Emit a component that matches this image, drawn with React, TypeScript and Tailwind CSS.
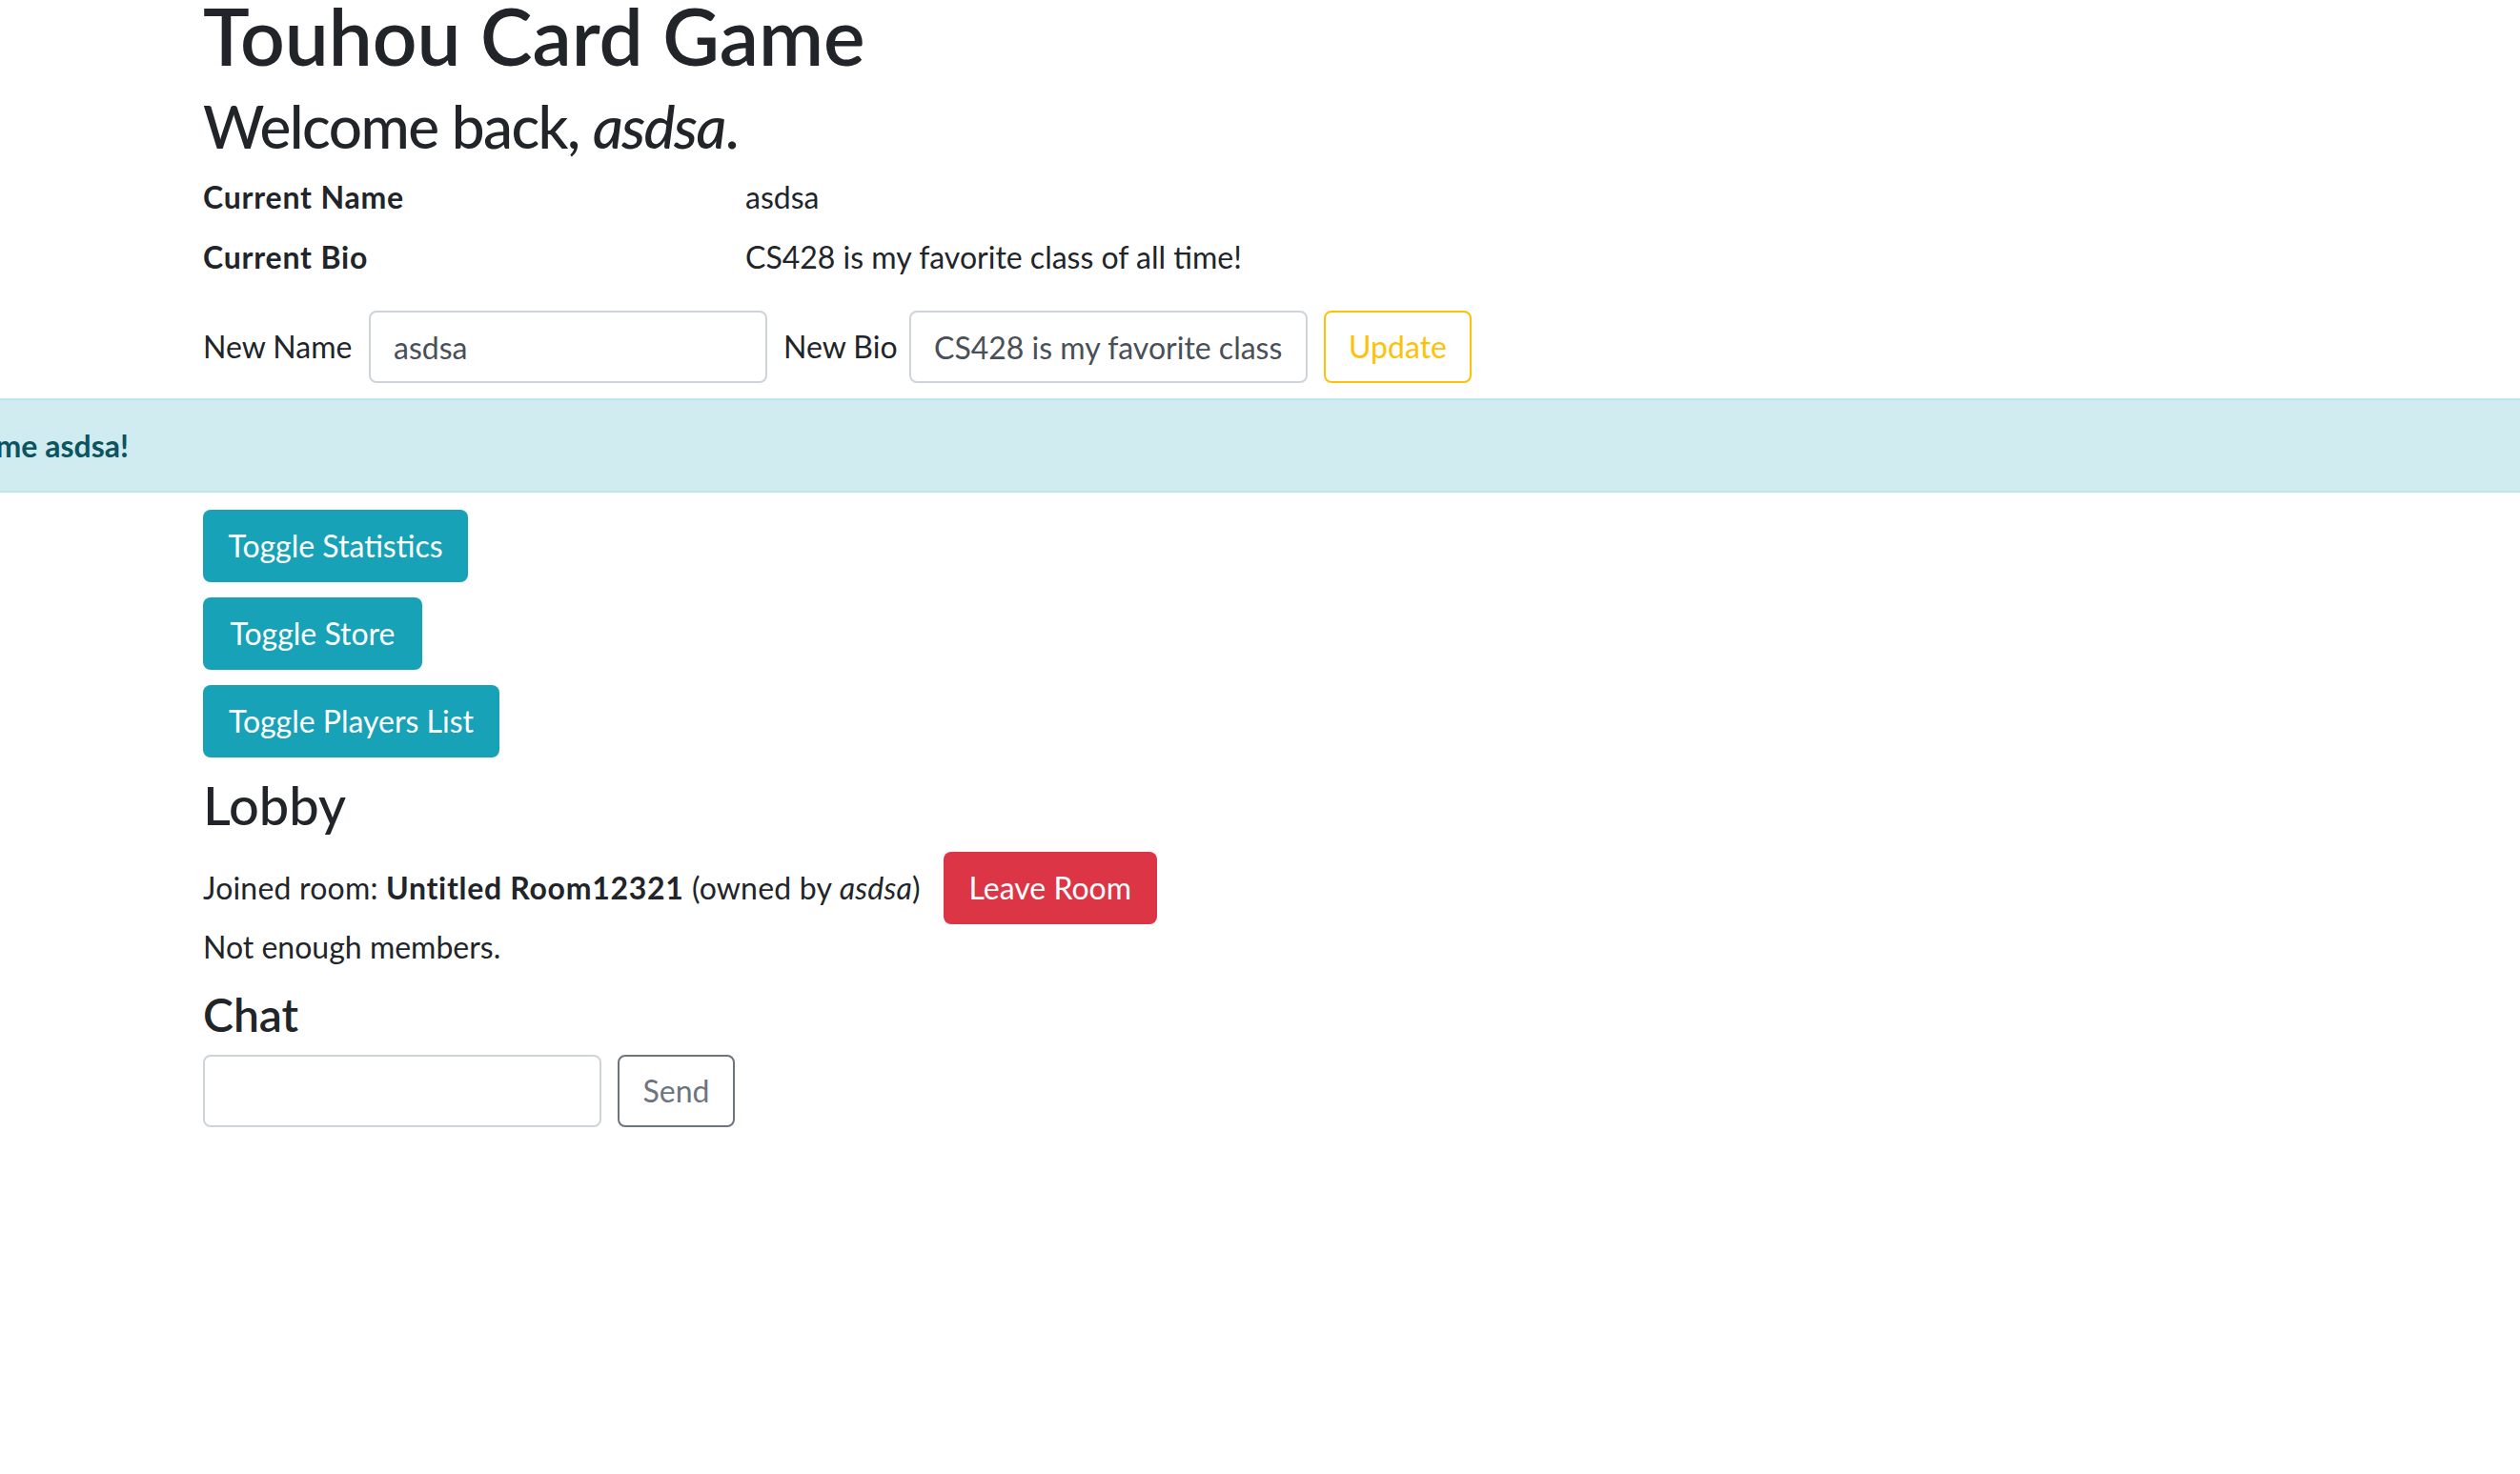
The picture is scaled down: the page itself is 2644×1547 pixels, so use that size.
import React from 'react';

// Lobby page of the card game, after the name change went through
const infoRows = [
  { label: 'Current Name', value: 'asdsa' },
  { label: 'Current Bio', value: 'CS428 is my favorite class of all time!' },
];

const toggles = [
  { label: 'Toggle Statistics', width: 'w-[278px]' },
  { label: 'Toggle Store', width: 'w-[230px]' },
  { label: 'Toggle Players List', width: 'w-[311px]' },
];

const App: React.FC = () => {
  return (
    <div className="min-h-screen bg-white text-[#212529] text-[32px] leading-[48px] [font-family:Lato,'Noto_Sans',sans-serif]">
      <div className="pl-[213px]">
        <h1 className="-mt-[9px] text-[82px] leading-[92px] font-semibold">Touhou Card Game</h1>
        <h2 className="mt-[11px] text-[62px] leading-[77px] font-medium tracking-[-1.5px]">
          Welcome back, <i>asdsa</i>.
        </h2>

        <div className="mt-[12px] flex flex-col gap-[15px]">
          {infoRows.map((row) => (
            <div key={row.label} className="flex">
              <div className="w-[569px] font-bold tracking-[0.8px]">{row.label}</div>
              <div>{row.value}</div>
            </div>
          ))}
        </div>

        <form className="mt-[32px] flex items-center" onSubmit={(e) => e.preventDefault()}>
          <label className="w-[174px]">New Name</label>
          <input
            defaultValue="asdsa"
            className="w-[418px] h-[76px] rounded-[8px] border-2 border-[#ced4da] px-[24px] text-[#495057] outline-none"
          />
          <label className="ml-[17px] w-[132px]">New Bio</label>
          <input
            defaultValue="CS428 is my favorite class of all time!"
            className="w-[418px] h-[76px] rounded-[8px] border-2 border-[#ced4da] px-[24px] text-[#495057] outline-none"
          />
          <button
            type="submit"
            className="ml-[17px] w-[155px] h-[76px] rounded-[8px] border-2 border-[#ffc107] text-[#ffc107]"
          >
            Update
          </button>
        </form>
      </div>

      <div className="mt-[16px] h-[99px] flex items-center border-y-2 border-[#bee5eb] bg-[#d1ecf1] text-[#0c5460] font-bold">
        <div className="w-[135px] flex justify-end overflow-hidden whitespace-nowrap">
          <span>Welcome asdsa!</span>
        </div>
      </div>

      <div className="pl-[213px]">
        <div className="mt-[18px] flex flex-col items-start gap-[16px]">
          {toggles.map((t) => (
            <button
              key={t.label}
              className={`${t.width} h-[76px] rounded-[8px] bg-[#17a2b8] text-white`}
            >
              {t.label}
            </button>
          ))}
        </div>

        <h3 className="mt-[16px] text-[56px] leading-[67px] font-medium">Lobby</h3>

        <div className="mt-[16px] flex items-center">
          <span className="tracking-[0.2px]">
            Joined room: <b className="tracking-[0.7px]">Untitled Room12321</b> (owned by <i>asdsa</i>)
          </span>
          <button className="ml-[24px] w-[224px] h-[76px] rounded-[8px] bg-[#dc3545] text-white">
            Leave Room
          </button>
        </div>
        <p>Not enough members.</p>

        <h4 className="mt-[18px] text-[48px] leading-[58px] font-semibold">Chat</h4>
        <div className="mt-[13px] flex items-center">
          <input className="w-[418px] h-[76px] rounded-[8px] border-2 border-[#ced4da] px-[24px] text-[#495057] outline-none" />
          <button className="ml-[17px] w-[123px] h-[76px] rounded-[8px] border-2 border-[#6c757d] text-[#6c757d]">
            Send
          </button>
        </div>
      </div>
    </div>
  );
};

export default App;
